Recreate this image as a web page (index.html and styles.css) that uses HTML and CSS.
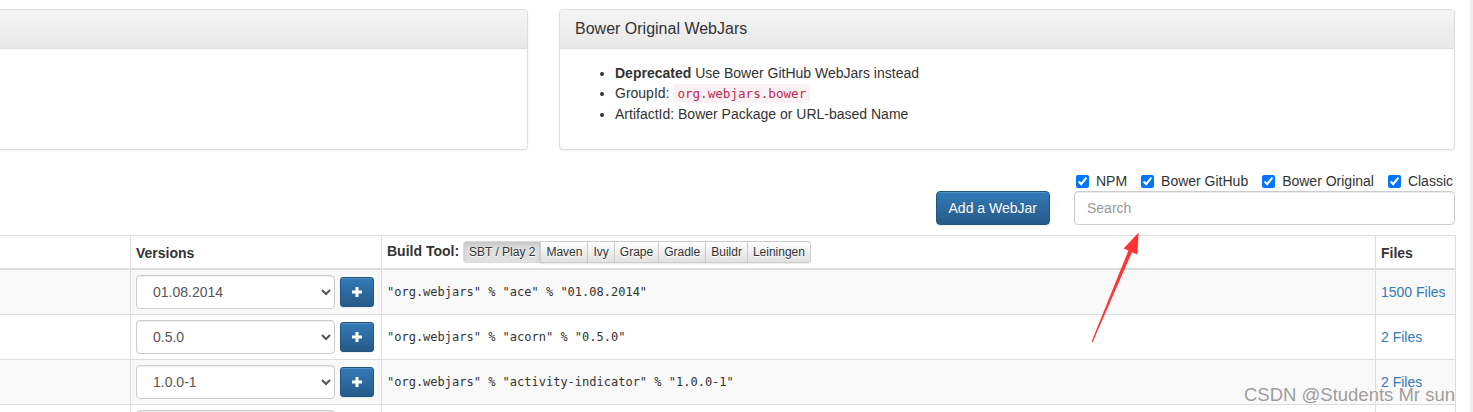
FILE: index.html
```html
<!DOCTYPE html>
<html lang="en">
<head>
<meta charset="utf-8">
<title>WebJars</title>
<link rel="stylesheet" href="styles.css">
</head>
<body>
<div class="page">
  <div class="container">
    <div class="panels">
      <div class="panel">
        <div class="panel-heading"></div>
        <div class="panel-body"></div>
      </div>
      <div class="panel">
        <div class="panel-heading"><h3 class="panel-title">Bower Original WebJars</h3></div>
        <div class="panel-body">
          <ul class="panel-list">
            <li><strong>Deprecated</strong> Use Bower GitHub WebJars instead</li>
            <li>GroupId: <code class="code-tag">org.webjars.bower</code></li>
            <li>ArtifactId: Bower Package or URL-based Name</li>
          </ul>
        </div>
      </div>
    </div>

    <div class="toolbar">
      <button class="btn-add" type="button">Add a WebJar</button>
      <div class="search-box">
        <div class="filters">
          <label class="filter"><input type="checkbox" checked><span>NPM</span></label>
          <label class="filter"><input type="checkbox" checked><span>Bower GitHub</span></label>
          <label class="filter"><input type="checkbox" checked><span>Bower Original</span></label>
          <label class="filter"><input type="checkbox" checked><span>Classic</span></label>
        </div>
        <input class="search" type="text" placeholder="Search">
      </div>
    </div>

    <table class="webjars">
      <colgroup>
        <col class="c-name">
        <col class="c-ver">
        <col class="c-build">
        <col class="c-files">
      </colgroup>
      <thead>
        <tr>
          <th></th>
          <th>Versions</th>
          <th>Build Tool: <span class="btn-group"><span class="btn-xs active">SBT / Play 2</span><span class="btn-xs">Maven</span><span class="btn-xs">Ivy</span><span class="btn-xs">Grape</span><span class="btn-xs">Gradle</span><span class="btn-xs">Buildr</span><span class="btn-xs">Leiningen</span></span></th>
          <th>Files</th>
        </tr>
      </thead>
      <tbody>
        <tr>
          <td></td>
          <td><div class="ver"><select class="ver-select"><option>01.08.2014</option></select><button class="btn-plus" type="button"><svg width="10" height="10" viewBox="0 0 10 10"><rect x="3.5" y="0" width="3" height="10" fill="#fff"/><rect x="0" y="3.5" width="10" height="3" fill="#fff"/></svg></button></div></td>
          <td class="code">"org.webjars" % "ace" % "01.08.2014"</td>
          <td><a class="files" href="#">1500 Files</a></td>
        </tr>
        <tr>
          <td></td>
          <td><div class="ver"><select class="ver-select"><option>0.5.0</option></select><button class="btn-plus" type="button"><svg width="10" height="10" viewBox="0 0 10 10"><rect x="3.5" y="0" width="3" height="10" fill="#fff"/><rect x="0" y="3.5" width="10" height="3" fill="#fff"/></svg></button></div></td>
          <td class="code">"org.webjars" % "acorn" % "0.5.0"</td>
          <td><a class="files" href="#">2 Files</a></td>
        </tr>
        <tr>
          <td></td>
          <td><div class="ver"><select class="ver-select"><option>1.0.0-1</option></select><button class="btn-plus" type="button"><svg width="10" height="10" viewBox="0 0 10 10"><rect x="3.5" y="0" width="3" height="10" fill="#fff"/><rect x="0" y="3.5" width="10" height="3" fill="#fff"/></svg></button></div></td>
          <td class="code">"org.webjars" % "activity-indicator" % "1.0.0-1"</td>
          <td><a class="files" href="#">2 Files</a></td>
        </tr>
        <tr>
          <td></td>
          <td><div class="ver"><select class="ver-select"><option>0.1.4</option></select><button class="btn-plus" type="button"><svg width="10" height="10" viewBox="0 0 10 10"><rect x="3.5" y="0" width="3" height="10" fill="#fff"/><rect x="0" y="3.5" width="10" height="3" fill="#fff"/></svg></button></div></td>
          <td class="code">"org.webjars" % "adm-zip" % "0.1.4"</td>
          <td><a class="files" href="#">5 Files</a></td>
        </tr>
      </tbody>
    </table>
  </div>

  <svg class="arrow" width="1470" height="412" viewBox="0 0 1470 412">
    <polygon fill="#ff3535" points="1091.5,341.8 1128.4,250.6 1123.6,248.4 1138.6,232.4 1137.4,254.6 1132.0,252.2 1092.6,342.2"/>
  </svg>
  <div class="watermark">CSDN @Students Mr sun</div>
</div>
</body>
</html>
```

FILE: styles.css
```css
* {
  box-sizing: border-box;
}

html,
body {
  margin: 0;
  padding: 0;
  background: #fff;
}

body {
  font-family: "Liberation Sans", Arial, Helvetica, sans-serif;
  font-size: 14px;
  line-height: 20px;
  color: #333;
  overflow: hidden;
}

.page {
  position: relative;
  width: 1473px;
  height: 412px;
  border-right: 3px solid #efefef;
  overflow: hidden;
}

.container {
  width: 1823px;
  margin-left: -368px;
  padding-top: 9px;
}

/* panels */
.panels {
  display: grid;
  grid-template-columns: 896px 896px;
  column-gap: 31px;
  margin-bottom: 21px;
}

.panel {
  display: flex;
  flex-direction: column;
  border: 1px solid #ddd;
  border-radius: 4px;
  background: #fff;
  box-shadow: 0 1px 2px rgba(0, 0, 0, 0.05);
}

.panel-heading {
  height: 39px;
  padding: 10px 15px 0;
  border-bottom: 1px solid #ddd;
  border-radius: 3px 3px 0 0;
  background: linear-gradient(to bottom, #f5f5f5 0%, #e8e8e8 100%);
}

.panel-title {
  margin: 0;
  font-size: 16px;
  font-weight: normal;
  line-height: 18px;
  color: #333;
}

.panel-body {
  flex: 1;
  padding: 14px 15px 15px;
}

.panel-list {
  margin: 0 0 10px;
  padding-left: 40px;
}

.code-tag {
  font-family: "DejaVu Sans Mono", Menlo, monospace;
  font-size: 12.6px;
  padding: 2px 4px;
  color: #c7254e;
  background: #f9f2f4;
  border-radius: 4px;
}

/* toolbar */
.toolbar {
  display: flex;
  justify-content: flex-end;
  align-items: flex-end;
  gap: 24px;
}

.btn-add {
  height: 34px;
  padding: 6px 12px;
  font-family: inherit;
  font-size: 14px;
  line-height: 20px;
  color: #fff;
  border: 1px solid #245580;
  border-radius: 4px;
  background: linear-gradient(to bottom, #337ab7 0%, #265a88 100%);
  text-shadow: 0 -1px 0 rgba(0, 0, 0, 0.2);
  box-shadow: inset 0 1px 0 rgba(255, 255, 255, 0.15), 0 1px 1px rgba(0, 0, 0, 0.075);
}

.search-box {
  width: 381px;
}

.filters {
  display: flex;
  justify-content: space-between;
  height: 20px;
  padding: 0 2px 0 2px;
}

.filter {
  display: flex;
  align-items: center;
  gap: 7px;
  line-height: 20px;
}

.filter input {
  width: 13px;
  height: 13px;
  margin: 0;
}

.search {
  display: block;
  width: 100%;
  height: 34px;
  padding: 6px 12px;
  font-family: inherit;
  font-size: 14px;
  color: #555;
  border: 1px solid #ccc;
  border-radius: 4px;
  background: #fff;
  box-shadow: inset 0 1px 1px rgba(0, 0, 0, 0.075);
}

.search::placeholder {
  color: #999;
}

/* table */
.webjars {
  width: 1823px;
  margin-top: 10px;
  table-layout: fixed;
  border-collapse: collapse;
}

.c-name { width: 498px; }
.c-ver { width: 251px; }
.c-build { width: 994px; }
.c-files { width: 80px; }

.webjars th,
.webjars td {
  border: 1px solid #ddd;
  padding: 5px;
  text-align: left;
}

.webjars thead th {
  vertical-align: bottom;
  border-bottom-width: 2px;
  font-weight: bold;
  line-height: 20px;
  white-space: nowrap;
}

.webjars tbody td {
  vertical-align: middle;
}

.webjars tbody tr:nth-child(odd) td {
  background: #f9f9f9;
}

.btn-group {
  display: inline-flex;
  vertical-align: middle;
  font-weight: normal;
}

.btn-xs {
  padding: 1px 5px;
  margin-left: -1px;
  font-size: 12px;
  line-height: 18px;
  color: #333;
  border: 1px solid #ccc;
  background: linear-gradient(to bottom, #fff 0%, #e0e0e0 100%);
  text-shadow: 0 1px 0 #fff;
  box-shadow: inset 0 1px 0 rgba(255, 255, 255, 0.15), 0 1px 1px rgba(0, 0, 0, 0.075);
}

.btn-xs:first-child {
  margin-left: 0;
  border-radius: 3px 0 0 3px;
}

.btn-xs:last-child {
  border-radius: 0 3px 3px 0;
}

.btn-xs.active {
  background: #e0e0e0;
  border-color: #dbdbdb;
  box-shadow: inset 0 3px 5px rgba(0, 0, 0, 0.125);
}

.ver {
  display: flex;
  align-items: center;
  gap: 5px;
}

.ver-select {
  width: 199px;
  height: 34px;
  padding: 6px 12px;
  font-family: inherit;
  font-size: 14px;
  color: #555;
  border: 1px solid #ccc;
  border-radius: 4px;
  background-color: #fff;
  box-shadow: inset 0 1px 1px rgba(0, 0, 0, 0.075);
}

.btn-plus {
  display: flex;
  align-items: center;
  justify-content: center;
  width: 34px;
  height: 30px;
  padding: 0;
  border: 1px solid #245580;
  border-radius: 3px;
  background: linear-gradient(to bottom, #337ab7 0%, #265a88 100%);
  box-shadow: inset 0 1px 0 rgba(255, 255, 255, 0.15), 0 1px 1px rgba(0, 0, 0, 0.075);
}

.code {
  font-family: "DejaVu Sans Mono", Menlo, monospace;
  font-size: 12px;
  color: #333;
  white-space: pre;
}

.files {
  color: #337ab7;
  text-decoration: none;
}

/* overlays */
.arrow {
  position: absolute;
  left: 0;
  top: 0;
  pointer-events: none;
}

.watermark {
  position: absolute;
  right: 15px;
  top: 383px;
  font-family: "Liberation Sans", Arial, sans-serif;
  font-size: 18.5px;
  line-height: 24px;
  color: #9c9c9c;
  text-shadow: 0 0 1px #fff, 0 0 1px #fff;
  white-space: nowrap;
}
```
